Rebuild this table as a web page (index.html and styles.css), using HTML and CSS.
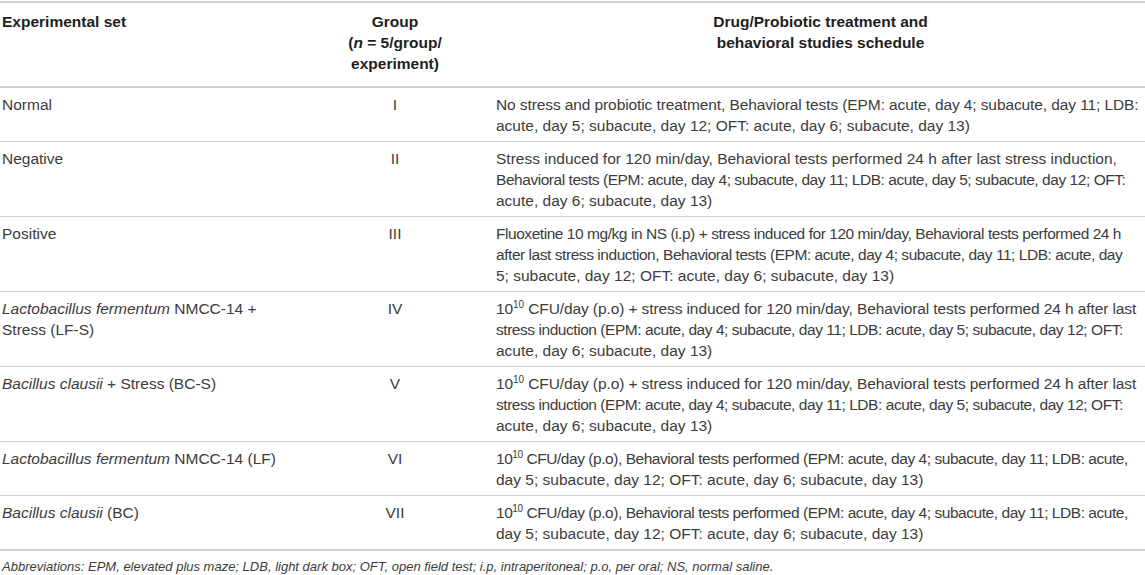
FILE: index.html
```html
<!DOCTYPE html>
<html>
<head>
<meta charset="utf-8">
<link rel="stylesheet" href="styles.css">
</head>
<body>
<table class="tbl">
  <colgroup>
    <col class="c1">
    <col class="c2">
    <col class="c3">
  </colgroup>
  <thead>
    <tr>
      <th class="h1">Experimental set</th>
      <th class="h2">Group<br>(<i>n</i> = 5/group/<br>experiment)</th>
      <th class="h3">Drug/Probiotic treatment and<br>behavioral studies schedule</th>
    </tr>
  </thead>
  <tbody>
    <tr>
      <td>Normal</td>
      <td class="grp">I</td>
      <td class="desc"><span class="ln snug">No stress and probiotic treatment, Behavioral tests (EPM: acute, day 4; subacute, day 11; LDB:</span><span class="ln">acute, day 5; subacute, day 12; OFT: acute, day 6; subacute, day 13)</span></td>
    </tr>
    <tr>
      <td>Negative</td>
      <td class="grp">II</td>
      <td class="desc"><span class="ln">Stress induced for 120 min/day, Behavioral tests performed 24 h after last stress induction,</span><span class="ln tight">Behavioral tests (EPM: acute, day 4; subacute, day 11; LDB: acute, day 5; subacute, day 12; OFT:</span><span class="ln">acute, day 6; subacute, day 13)</span></td>
    </tr>
    <tr>
      <td>Positive</td>
      <td class="grp">III</td>
      <td class="desc"><span class="ln tight">Fluoxetine 10 mg/kg in NS (i.p) + stress induced for 120 min/day, Behavioral tests performed 24 h</span><span class="ln tight">after last stress induction, Behavioral tests (EPM: acute, day 4; subacute, day 11; LDB: acute, day</span><span class="ln">5; subacute, day 12; OFT: acute, day 6; subacute, day 13)</span></td>
    </tr>
    <tr>
      <td><i>Lactobacillus fermentum</i> NMCC-14 +<br>Stress (LF-S)</td>
      <td class="grp">IV</td>
      <td class="desc"><span class="ln snug">10<sup>10</sup> CFU/day (p.o) + stress induced for 120 min/day, Behavioral tests performed 24 h after last</span><span class="ln tight">stress induction (EPM: acute, day 4; subacute, day 11; LDB: acute, day 5; subacute, day 12; OFT:</span><span class="ln">acute, day 6; subacute, day 13)</span></td>
    </tr>
    <tr>
      <td><i>Bacillus clausii</i> + Stress (BC-S)</td>
      <td class="grp">V</td>
      <td class="desc"><span class="ln snug">10<sup>10</sup> CFU/day (p.o) + stress induced for 120 min/day, Behavioral tests performed 24 h after last</span><span class="ln tight">stress induction (EPM: acute, day 4; subacute, day 11; LDB: acute, day 5; subacute, day 12; OFT:</span><span class="ln">acute, day 6; subacute, day 13)</span></td>
    </tr>
    <tr>
      <td><i>Lactobacillus fermentum</i> NMCC-14 (LF)</td>
      <td class="grp">VI</td>
      <td class="desc"><span class="ln tight">10<sup>10</sup> CFU/day (p.o), Behavioral tests performed (EPM: acute, day 4; subacute, day 11; LDB: acute,</span><span class="ln">day 5; subacute, day 12; OFT: acute, day 6; subacute, day 13)</span></td>
    </tr>
    <tr>
      <td><i>Bacillus clausii</i> (BC)</td>
      <td class="grp">VII</td>
      <td class="desc"><span class="ln tight">10<sup>10</sup> CFU/day (p.o), Behavioral tests performed (EPM: acute, day 4; subacute, day 11; LDB: acute,</span><span class="ln">day 5; subacute, day 12; OFT: acute, day 6; subacute, day 13)</span></td>
    </tr>
  </tbody>
</table>
<p class="note">Abbreviations: EPM, elevated plus maze; LDB, light dark box; OFT, open field test; i.p, intraperitoneal; p.o, per oral; NS, normal saline.</p>
</body>
</html>
```

FILE: styles.css
```css
html, body {
  margin: 0;
  padding: 0;
  background: #ffffff;
}
body {
  font-family: "Liberation Sans", Arial, sans-serif;
  color: #3c3c3c;
  font-size: 15.5px;
  line-height: 21px;
}
.tbl {
  width: 1145px;
  border-collapse: collapse;
  table-layout: fixed;
  margin-top: 1px;
  border-top: 2px solid #d2d2d2;
  border-bottom: 2px solid #d2d2d2;
}
.c1 { width: 305px; }
.c2 { width: 180px; }
.c3 { width: 660px; }
th {
  font-weight: bold;
  color: #1e1e1e;
  vertical-align: top;
  padding: 8px 2px 12px 2px;
  border-bottom: 2px solid #d2d2d2;
}
.h1 { text-align: left; }
.h2 { text-align: center; }
.h3 { text-align: center; padding-left: 11px; padding-right: 0; }
td {
  vertical-align: top;
  padding: 6px 2px 5px 2px;
  border-top: 1px solid #cfcfcf;
}
tbody tr:first-child td { border-top: none; }
.grp { text-align: center; }
.desc { padding-left: 11px; padding-right: 0; }
.ln {
  display: block;
  white-space: nowrap;
}
.tight { letter-spacing: -0.45px; }
.snug { letter-spacing: -0.1px; }
sup {
  font-size: 10px;
  line-height: 0;
  vertical-align: 6px;
}
.note {
  margin: 7px 0 0 2px;
  font-style: italic;
  font-size: 13px;
  line-height: 18px;
  color: #3c3c3c;
}
```
